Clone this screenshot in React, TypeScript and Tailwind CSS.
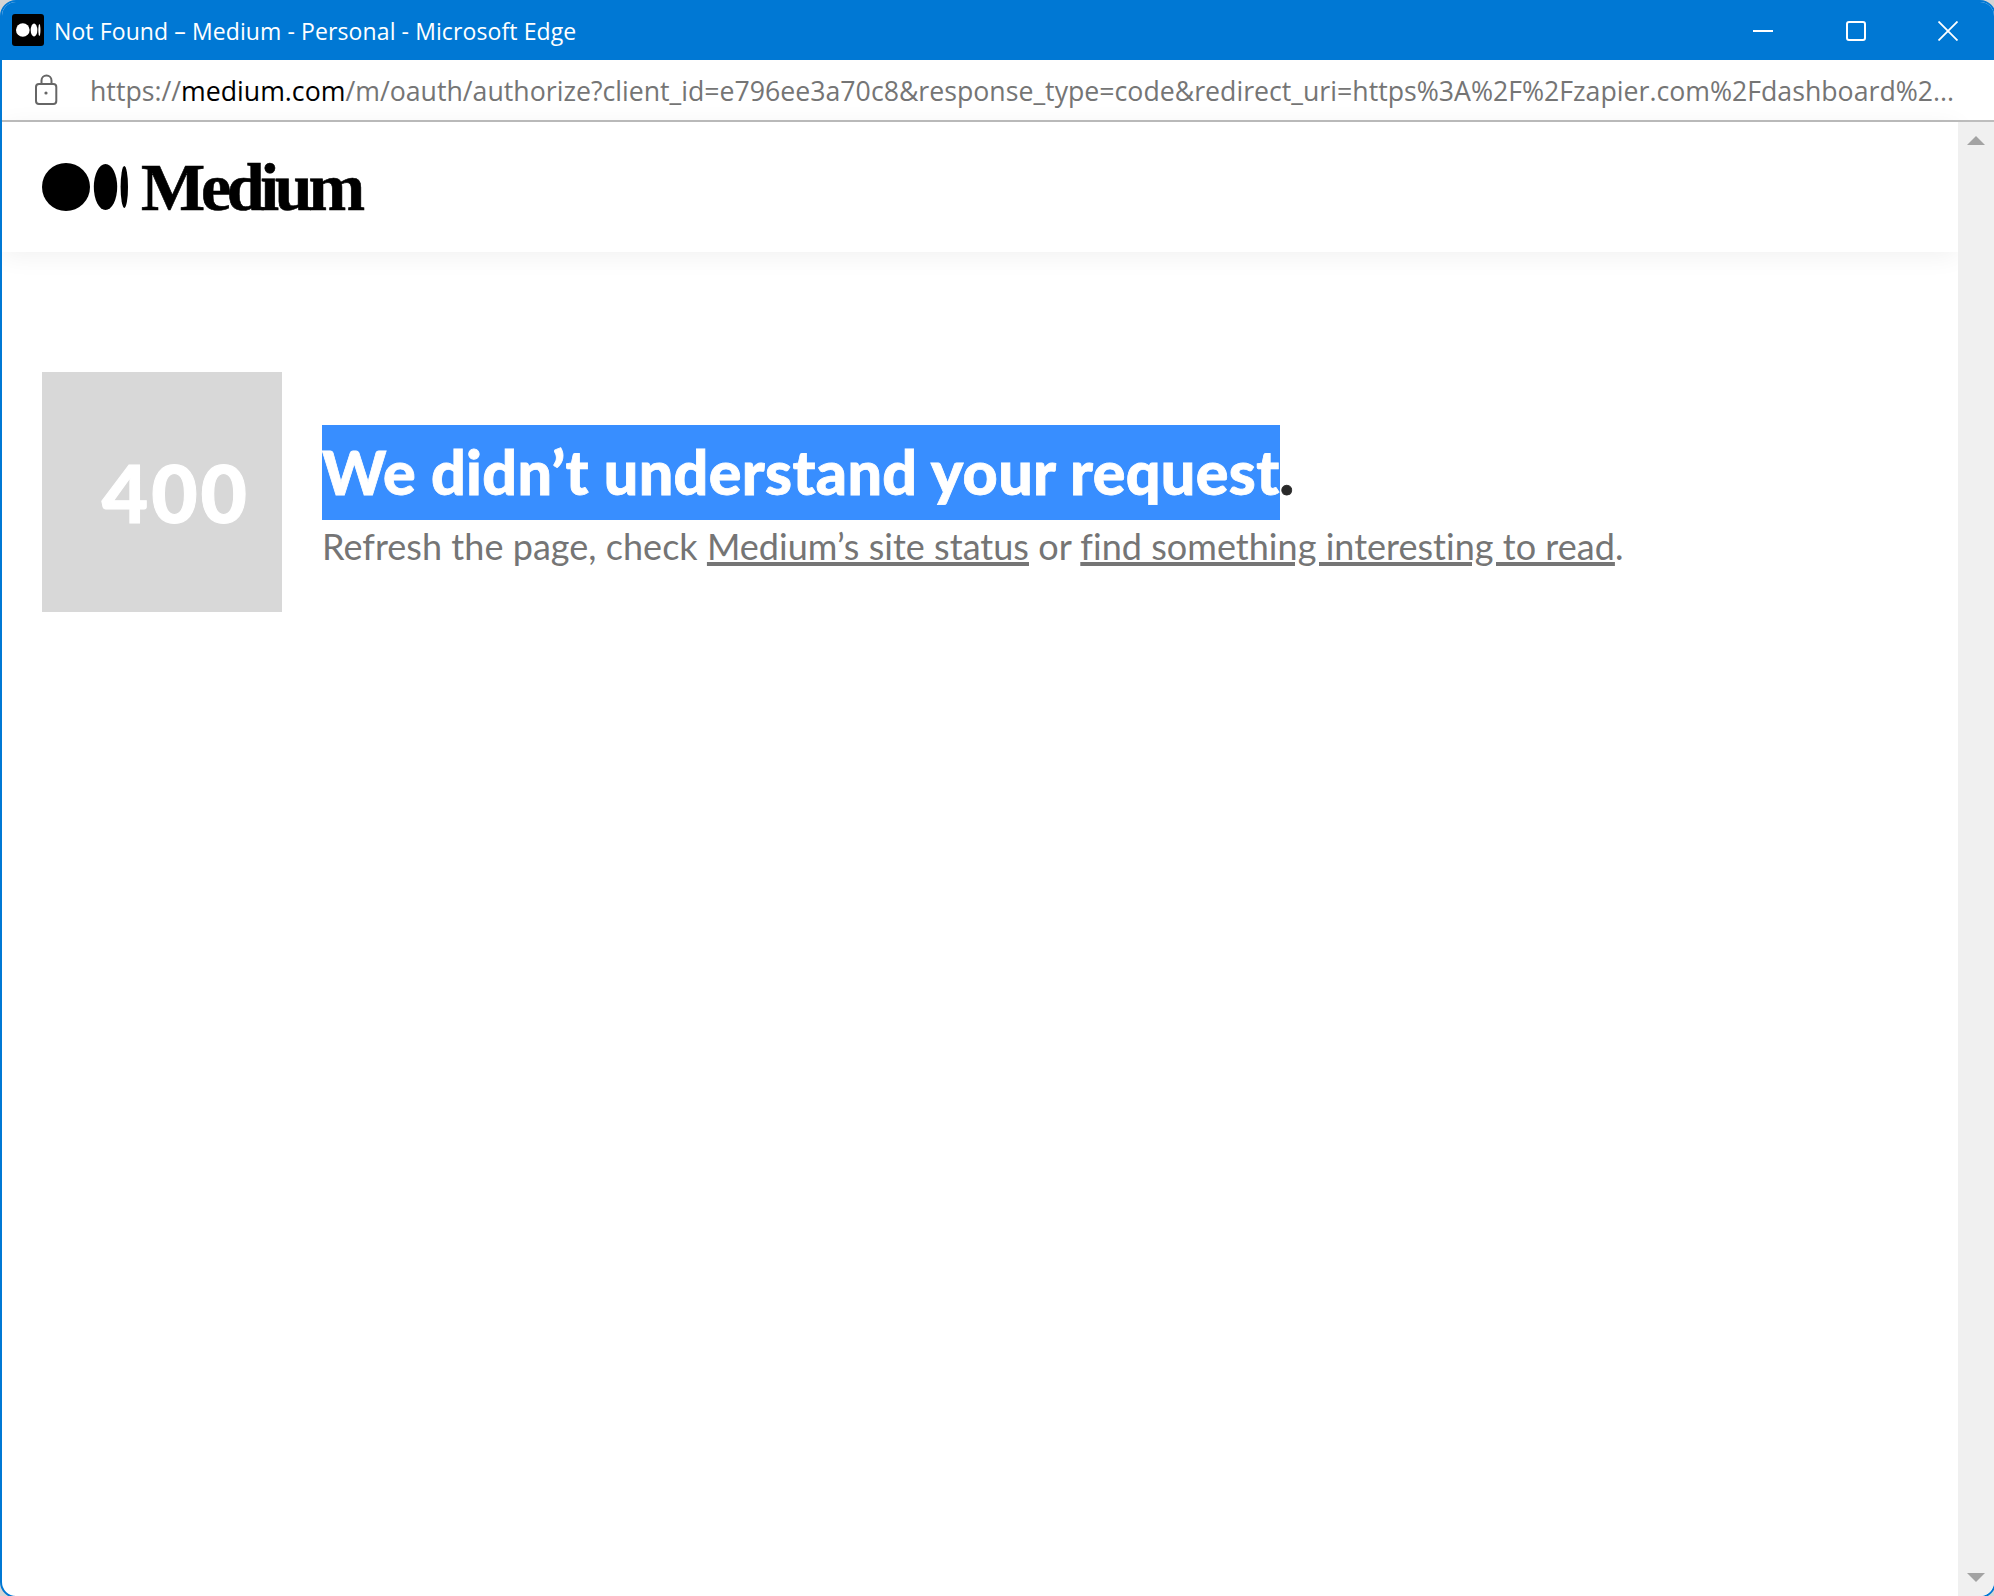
const sans = "font-['Open_Sans','Noto_Sans',sans-serif]";

function MediumMark({ className }: { className?: string }) {
  return (
    <svg viewBox="0 0 88 48" className={className} fill="currentColor">
      <circle cx="24" cy="24" r="24" />
      <ellipse cx="63.5" cy="24" rx="11.7" ry="23" />
      <ellipse cx="82.3" cy="24" rx="3.7" ry="21" />
    </svg>
  );
}

function LockIcon() {
  return (
    <svg viewBox="0 0 24 32" className="ml-8 w-6 h-8 text-[#666666]" fill="none" stroke="currentColor" strokeWidth="2">
      <rect x="2" y="10" width="20.3" height="20" rx="3" />
      <path d="M7.5 10V6.5a5 5 0 0 1 10 0V10" />
      <circle cx="12" cy="19" r="1.6" fill="currentColor" stroke="none" />
    </svg>
  );
}

function TitleBar() {
  return (
    <div className="h-[58px] shrink-0 bg-[#0078d4] flex items-center text-white">
      <div className="ml-[10px] -mt-[2px] w-8 h-8 bg-black rounded-[3px] flex items-center justify-center">
        <MediumMark className="w-[25px] h-[14px] text-white" />
      </div>
      <span className="ml-[10px] text-[23px] tracking-[0.1px] font-['Open_Sans',sans-serif]">
        Not Found – Medium - Personal - Microsoft Edge
      </span>
      <div className="ml-auto flex items-center">
        <div className="w-5 h-[2px] bg-white mr-[73px]" />
        <div className="w-5 h-5 border-2 border-white rounded-[3px] mr-[72px]" />
        <svg viewBox="0 0 20 20" className="w-5 h-5 mr-[36px]" stroke="currentColor" strokeWidth="1.8">
          <path d="M0.5 0.5 L19.5 19.5 M19.5 0.5 L0.5 19.5" />
        </svg>
      </div>
    </div>
  );
}

function AddressBar() {
  return (
    <div className="h-[62px] shrink-0 bg-white border-b-2 border-[#bdbdbd] flex items-center text-[#757575]">
      <LockIcon />
      <div className={`ml-[32px] mt-[2px] text-[26.7px] whitespace-nowrap ${sans}`}>
        https://<span className="text-black">medium.com</span>
        /m/oauth/authorize?client_id=e796ee3a70c8&amp;response_type=code&amp;redirect_uri=https%3A%2F%2Fzapier.com%2Fdashboard%2...
      </div>
    </div>
  );
}

function Scrollbar() {
  return (
    <div className="w-[36px] shrink-0 bg-[#f0f0f0] flex flex-col items-center justify-between pt-[14px] pb-[14px]">
      <div className="w-0 h-0 border-x-[9px] border-x-transparent border-b-[9px] border-b-[#a3a3a3]" />
      <div className="w-0 h-0 border-x-[9px] border-x-transparent border-t-[9px] border-t-[#a3a3a3]" />
    </div>
  );
}

export default function App() {
  return (
    <div className="w-[1994px] h-[1596px] overflow-hidden bg-[#d4d4d4]">
      <div className="w-[1996px] h-[1598px] bg-white overflow-hidden rounded-[16px] border-2 border-[#0078d4] flex flex-col">
        <TitleBar />
        <AddressBar />
        <div className="flex-1 flex min-h-0">
          <div className="flex-1 flex flex-col min-w-0">
            <header className="h-[130px] shrink-0 px-10 flex items-center shadow-[0_4px_24px_rgba(0,0,0,0.06)]">
              <MediumMark className="w-[88px] h-[48px] text-black" />
              <span className="ml-[11px] text-[68px] leading-none font-bold text-black font-['Liberation_Serif',serif] tracking-[-4.3px] [-webkit-text-stroke:0.6px_black]">
                Medium
              </span>
            </header>
            <main className="pt-[120px] px-10 flex items-start gap-10">
              <div className="w-[240px] h-[240px] bg-[#d8d8d8] flex items-center justify-end pr-[32px]">
                <span className="text-[80px] font-black tracking-[3px] text-white font-['Lato',sans-serif] [-webkit-text-stroke:1px_white]">
                  400
                </span>
              </div>
              <div className="mt-[53px] font-['Lato',sans-serif] flex flex-col">
                <h1 className="text-[61px] font-black tracking-[0.35px] text-[#292929] leading-[93px] h-[95px] whitespace-nowrap [-webkit-text-stroke:0.8px_currentColor]">
                  <span className="inline-block h-[95px] bg-[#388eff] text-white">We didn’t understand your request</span>.
                </h1>
                <p className="text-[36px] tracking-[0.03px] leading-[52px] text-[#757575] whitespace-nowrap">
                  Refresh the page, check <a className="underline decoration-[4px] underline-offset-[2px]">Medium’s site status</a> or{" "}
                  <a className="underline decoration-[4px] underline-offset-[2px]">find something interesting to read</a>.
                </p>
              </div>
            </main>
          </div>
          <Scrollbar />
        </div>
      </div>
    </div>
  );
}
